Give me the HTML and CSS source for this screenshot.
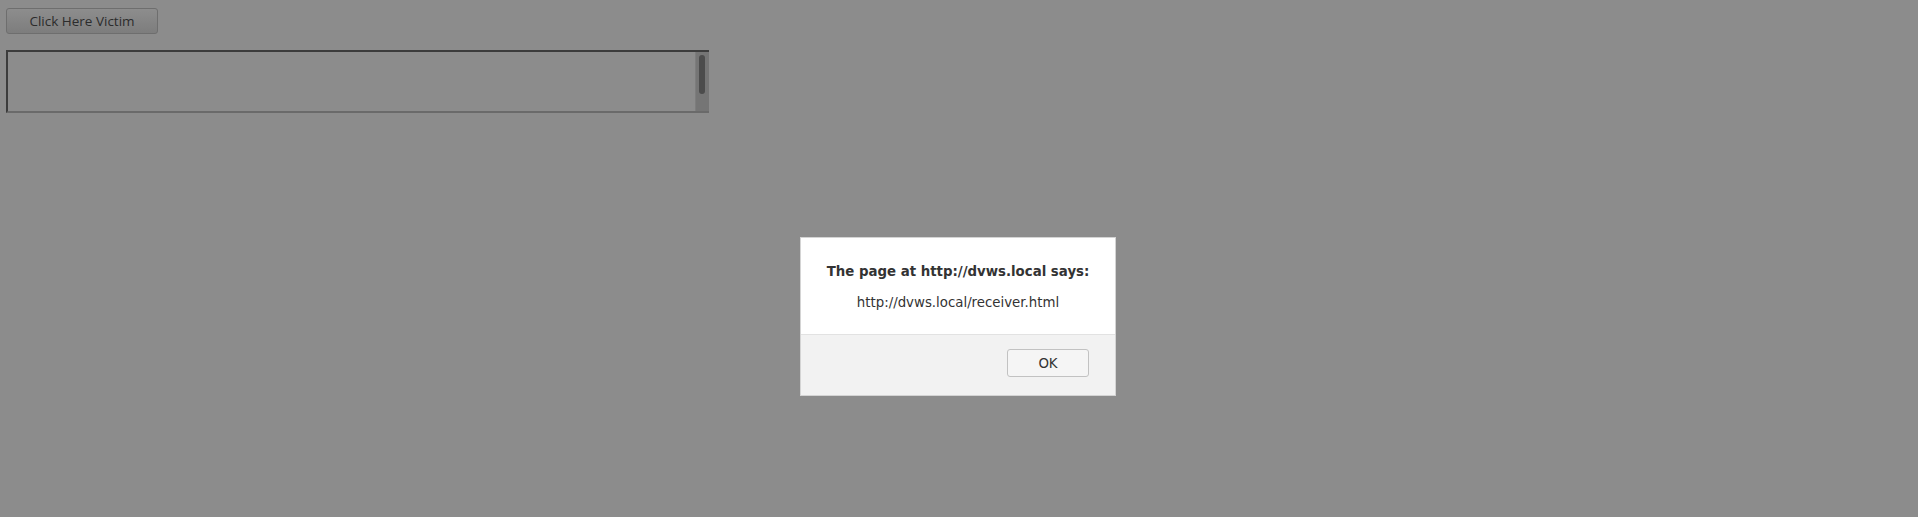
FILE: index.html
```html
<!DOCTYPE html>
<html>
<head>
<meta charset="utf-8">
<link rel="stylesheet" href="styles.css">
</head>
<body>
<div class="page">
  <button class="victim-btn">Click Here Victim</button>
  <div class="textbox">
    <div class="textbox-area"></div>
    <div class="scroll-track"><div class="scroll-thumb"></div></div>
  </div>
</div>
<div class="alert">
  <div class="alert-body">
    <div class="alert-title">The page at http://dvws.local says:</div>
    <div class="alert-msg">http://dvws.local/receiver.html</div>
  </div>
  <div class="alert-footer">
    <button class="ok-btn">OK</button>
  </div>
</div>
</body>
</html>
```

FILE: styles.css
```css
html, body {
  margin: 0;
  padding: 0;
  background: #8c8c8c;
  height: 100%;
}
body {
  font-family: "DejaVu Sans", "Liberation Sans", sans-serif;
}
.page {
  padding: 8px 0 0 6px;
  display: flex;
  flex-direction: column;
  align-items: flex-start;
}
.victim-btn {
  box-sizing: border-box;
  width: 152px;
  height: 26px;
  border: 1px solid #6e6e6e;
  border-radius: 3px;
  background: linear-gradient(#8d8d8d, #7d7d7d);
  color: #2c2c2c;
  font-family: "Open Sans", "DejaVu Sans", sans-serif;
  font-size: 13.5px;
  padding: 0;
  margin: 0;
}
.textbox {
  box-sizing: border-box;
  margin-top: 16px;
  width: 703px;
  height: 63px;
  display: flex;
  border-top: 2px solid #3c3c3c;
  border-left: 2px solid #3c3c3c;
  border-bottom: 2px solid #6a6a6a;
}
.textbox-area {
  flex: 1;
}
.scroll-track {
  width: 13px;
  background: #757575;
  border-left: 1px solid #7d7d7d;
  position: relative;
}
.scroll-thumb {
  position: absolute;
  left: 3px;
  top: 3px;
  width: 6px;
  height: 39px;
  border-radius: 3px;
  background: #4c4c4c;
}
.alert {
  position: absolute;
  left: 800px;
  top: 237px;
  width: 316px;
  box-sizing: border-box;
  border: 1px solid #d4d4d4;
  background: #fff;
}
.alert-body {
  padding: 25px 10px 23px;
  text-align: center;
  color: #333;
  font-size: 13.33px;
}
.alert-title {
  font-weight: bold;
  line-height: 17px;
}
.alert-msg {
  margin-top: 14px;
  line-height: 17px;
}
.alert-footer {
  background: #f2f2f2;
  border-top: 1px solid #e2e2e2;
  padding: 14px 26px 18px;
  display: flex;
  justify-content: flex-end;
}
.ok-btn {
  box-sizing: border-box;
  width: 82px;
  height: 28px;
  border: 1px solid #c2c2c2;
  border-radius: 3px;
  background: #f5f5f5;
  color: #333;
  font-family: "DejaVu Sans", sans-serif;
  font-size: 13.33px;
  padding: 0;
}
```
